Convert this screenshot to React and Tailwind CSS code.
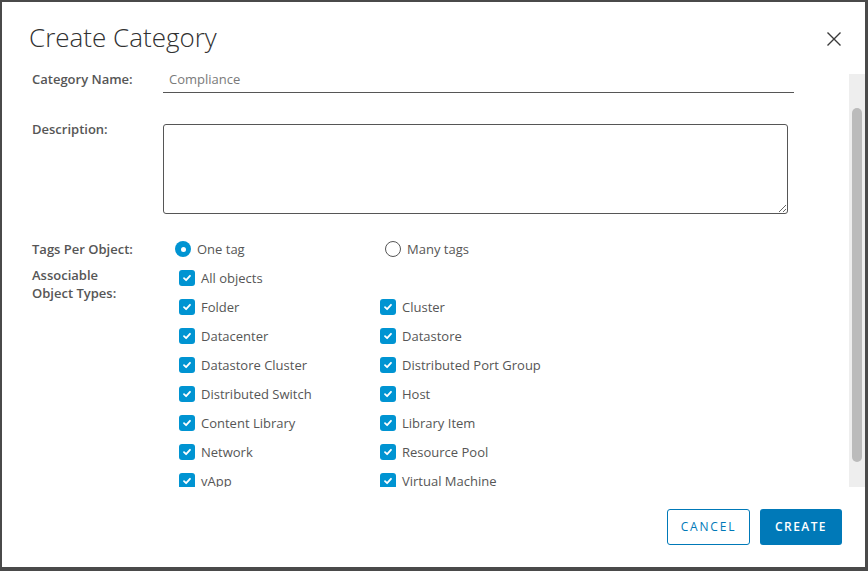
import React from 'react';

const font = { fontFamily: '"Open Sans", "Liberation Sans", sans-serif' };

function Check() {
  return (
    <span className="w-[16px] h-[16px] rounded-[3px] bg-[#0094d2] flex items-center justify-center shrink-0">
      <svg width="10" height="10" viewBox="0 0 10 10">
        <path d="M2 5.2 L4.1 7.2 L8 2.8" fill="none" stroke="white" strokeWidth="1.8" strokeLinecap="round" strokeLinejoin="round" />
      </svg>
    </span>
  );
}

function Item({ label }) {
  return (
    <div className="flex items-center h-[16px] w-[201px]">
      <Check />
      <span className="ml-[6px] text-[13px] leading-[16px] text-[#565656]">{label}</span>
    </div>
  );
}

const pairs = [
  ['Folder', 'Cluster'],
  ['Datacenter', 'Datastore'],
  ['Datastore Cluster', 'Distributed Port Group'],
  ['Distributed Switch', 'Host'],
  ['Content Library', 'Library Item'],
  ['Network', 'Resource Pool'],
  ['vApp', 'Virtual Machine'],
];

export default function App() {
  return (
    <div className="w-[868px] h-[571px] bg-[#4a4a4a] pt-[2px] pl-[2px] overflow-hidden" style={font}>
      <div className="w-[863px] h-[565px] bg-white flex flex-col">
        {/* Header */}
        <div className="h-[69px] shrink-0 flex items-start justify-between pl-[27px] pr-[23px] pt-[18px]">
          <h1 className="text-[26px] leading-[34px] font-light text-[#313131]">Create Category</h1>
          <button className="mt-[11px]">
            <svg width="16" height="16" viewBox="0 0 16 16">
              <path d="M1.5 1.5 L14.5 14.5 M14.5 1.5 L1.5 14.5" stroke="#3a3a3a" strokeWidth="1.4" fill="none" />
            </svg>
          </button>
        </div>

        {/* Body */}
        <div className="flex-1 min-h-0 flex">
          <div className="flex-1 overflow-hidden pl-[30px]">
            <div className="flex items-start">
              <label className="w-[131px] text-[13px] leading-[16px] font-semibold text-[#565656]">Category Name:</label>
              <div className="w-[631px] h-[22px] border-b border-[#565656] pl-[6px] text-[13px] leading-[16px] text-[#7a7a7a]">Compliance</div>
            </div>

            <div className="flex items-start mt-[31px]">
              <label className="w-[131px] -mt-[3px] text-[13px] leading-[16px] font-semibold text-[#565656]">Description:</label>
              <textarea className="w-[625px] h-[90px] border border-[#565656] rounded-[3px] outline-none block" />
            </div>

            <div className="flex items-center mt-[27px] h-[16px]">
              <label className="w-[131px] text-[13px] leading-[16px] font-semibold text-[#565656]">Tags Per Object:</label>
              <div className="flex items-center ml-[12px] w-[210px]">
                <span className="w-[16px] h-[16px] rounded-full bg-[#0094d2] flex items-center justify-center">
                  <span className="w-[5px] h-[5px] rounded-full bg-white" />
                </span>
                <span className="ml-[6px] text-[13px] leading-[16px] text-[#565656]">One tag</span>
              </div>
              <div className="flex items-center">
                <span className="w-[16px] h-[16px] rounded-full border border-[#565656] bg-white" />
                <span className="ml-[6px] text-[13px] leading-[16px] text-[#565656]">Many tags</span>
              </div>
            </div>

            <div className="flex items-start mt-[9px]">
              <label className="w-[131px] text-[13px] leading-[18px] font-semibold text-[#565656]">
                Associable
                <br />
                Object Types:
              </label>
              <div className="ml-[16px] pt-[4px] flex flex-col gap-y-[13px]">
                <Item label="All objects" />
                {pairs.map(([a, b]) => (
                  <div key={a} className="flex">
                    <Item label={a} />
                    <Item label={b} />
                  </div>
                ))}
              </div>
            </div>
          </div>
          <div className="w-[16px] shrink-0 mt-[3px] bg-[#eeeeee] pt-[34px]">
            <div className="mx-[3px] w-[10px] h-[354px] rounded-full bg-[#bbbbbb]" />
          </div>
        </div>

        {/* Footer */}
        <div className="h-[80px] shrink-0 flex justify-end items-start gap-[10px] pt-[22px] pr-[23px]">
          <button className="w-[83px] h-[36px] rounded-[3px] border border-[#0079b8] bg-white text-[#0079b8] text-[12px] font-medium tracking-[0.15em] uppercase">
            Cancel
          </button>
          <button className="w-[82px] h-[36px] rounded-[3px] bg-[#0079b8] text-white text-[12px] font-semibold tracking-[0.12em] uppercase">
            Create
          </button>
        </div>
      </div>
    </div>
  );
}
